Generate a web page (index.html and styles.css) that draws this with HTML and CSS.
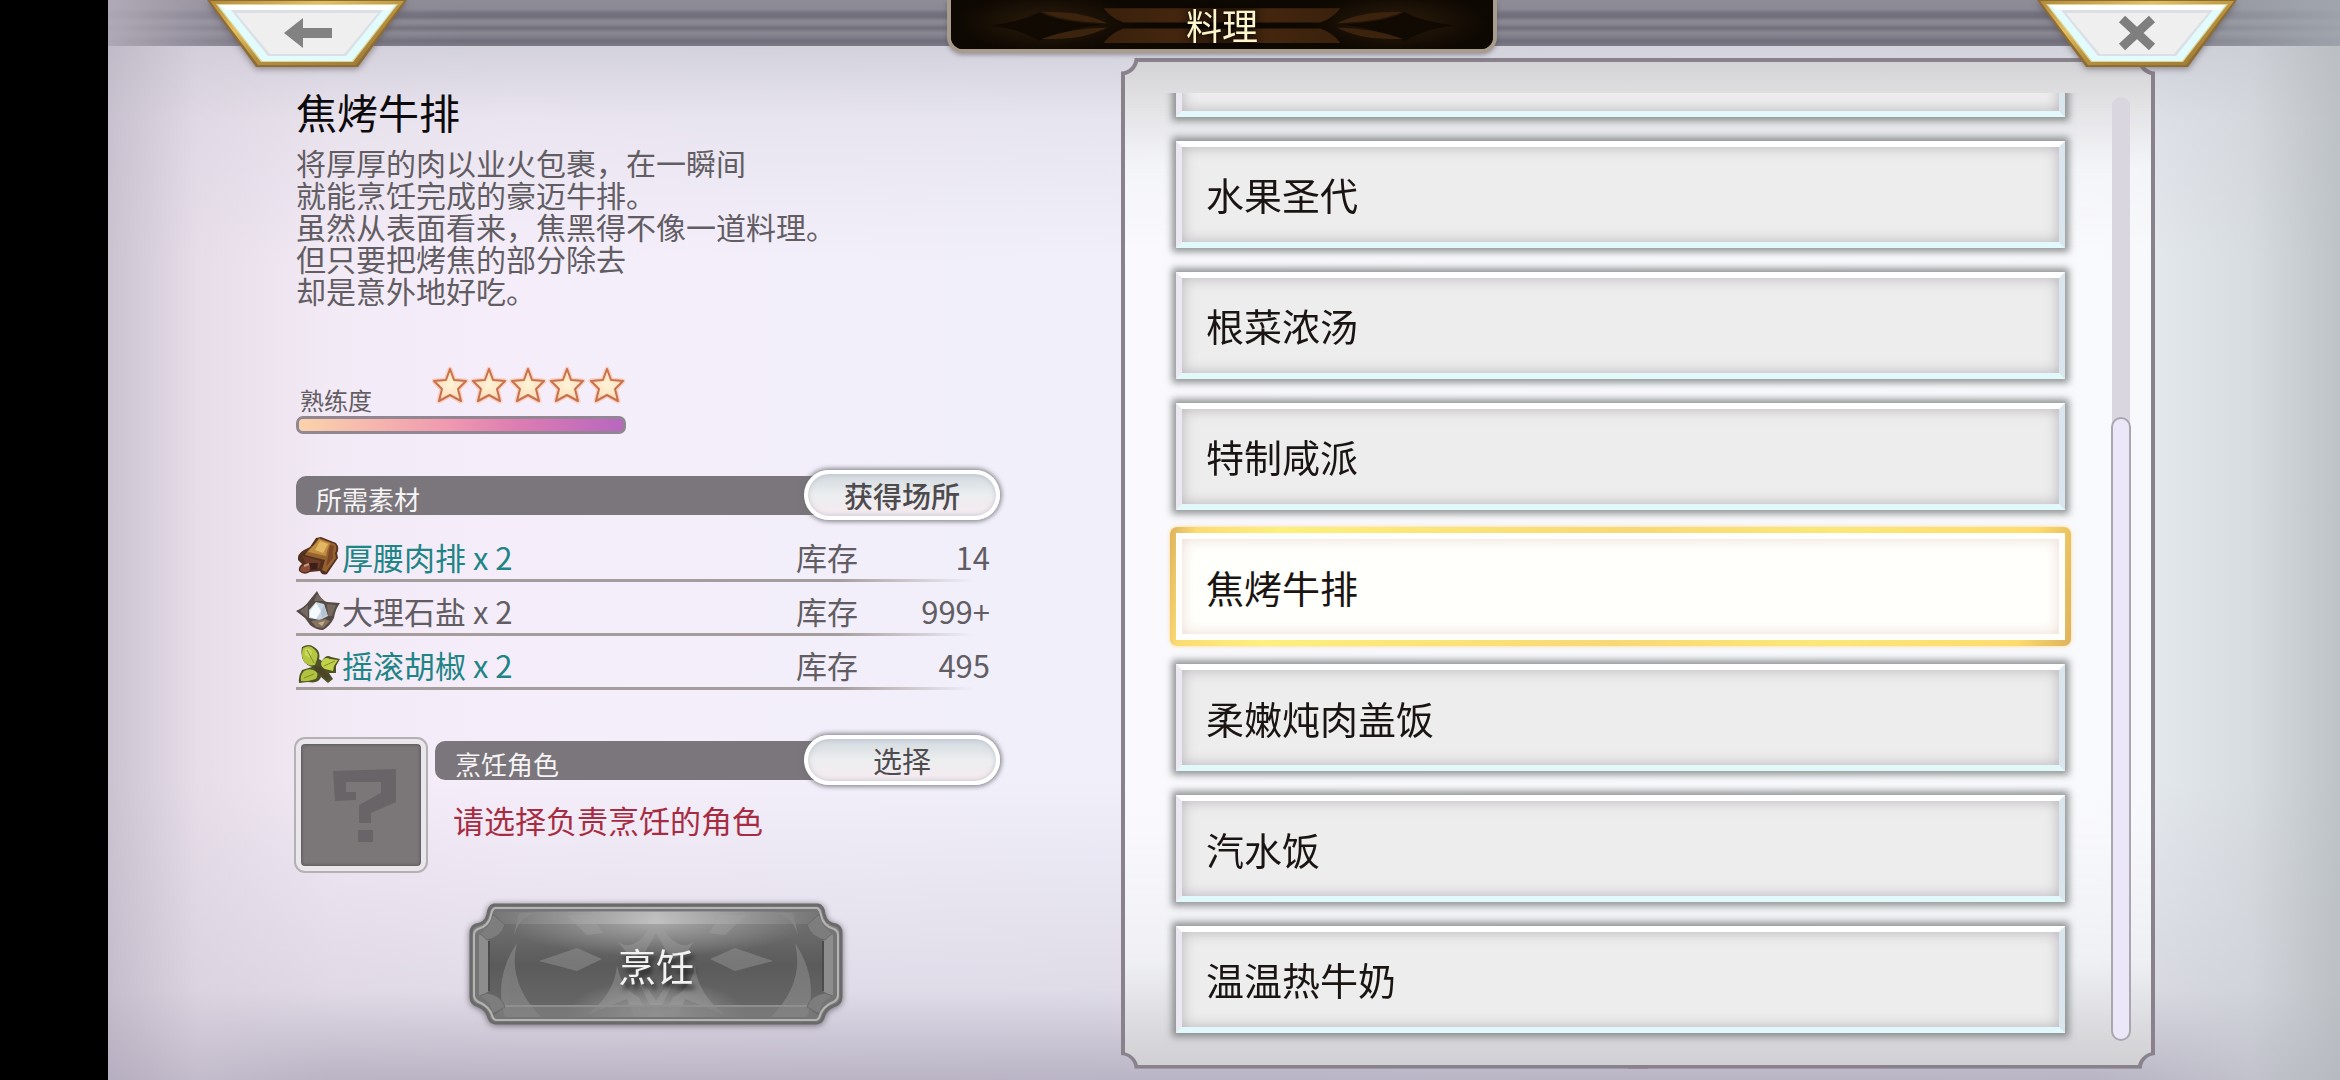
FILE: index.html
```html
<!DOCTYPE html>
<html lang="zh-CN">
<head>
<meta charset="utf-8">
<meta name="viewport" content="width=device-width, initial-scale=1">
<title>料理</title>
<link rel="stylesheet" href="styles.css">
</head>
<body>
<div class="stage">
  <header class="topbar">
    <button class="corner-button" type="button" aria-label="返回">
      <svg class="corner-art" viewBox="0 0 200 68" aria-hidden="true">
        <defs>
          <linearGradient id="gold" x1="0" y1="0" x2="1" y2="1">
            <stop offset="0" stop-color="#b48a3c"/><stop offset=".3" stop-color="#e2bf62"/>
            <stop offset=".55" stop-color="#b8923f"/><stop offset="1" stop-color="#9a7635"/>
          </linearGradient>
        </defs>
        <path d="M0 0H200L151 67H49Z" fill="#8e6d33"/>
        <path d="M3 1H197L149 65H51Z" fill="url(#gold)"/>
        <path d="M9 4H191L146 62H54Z" fill="#dcd79a"/>
        <path d="M11 5H189L145 61H55Z" fill="#e2fbfc"/>
        <path d="M13 5H187L182 10H19Z" fill="#fff"/>
        <path d="M24 10H176L139 56H61Z" fill="#dcdfe6"/>
        <path d="M29 13H171L137 54H63Z" fill="#efefef"/>
        <path d="M77 33L96 18V28H125V38H96V48Z" fill="#828282"/>
      </svg>
    </button>
    <div class="plaque">
      <svg class="plaque-art" viewBox="0 0 540 48" preserveAspectRatio="none" aria-hidden="true">
        <defs>
          <radialGradient id="glow"><stop offset="0" stop-color="#3a240f"/><stop offset="1" stop-color="#0d0802"/></radialGradient>
          <linearGradient id="bar" x1="0" y1="0" x2="1" y2="0"><stop offset="0" stop-color="#3a210c"/><stop offset=".6" stop-color="#43260e"/><stop offset="1" stop-color="#2c190a"/></linearGradient>
        </defs>
        <rect width="540" height="48" fill="#0d0802"/>
        <ellipse cx="95" cy="22" rx="90" ry="30" fill="url(#glow)" opacity=".7"/>
        <ellipse cx="445" cy="22" rx="90" ry="30" fill="url(#glow)" opacity=".7"/>
        <g id="wing">
          <path d="M38 25Q68 22 88 12Q110 22 150 24Q110 30 88 40Q68 28 38 25Z" fill="#110a03"/>
          <path d="M90 12Q130 10 156 23Q118 22 90 12Z" fill="#3c230e"/>
          <path d="M90 38Q130 40 156 27Q118 28 90 38Z" fill="#3c230e"/>
          <path d="M152 8H270V22H172Q160 18 152 8Z" fill="url(#bar)"/>
          <path d="M152 42H270V28H172Q160 32 152 42Z" fill="url(#bar)"/>
        </g>
        <use href="#wing" transform="translate(540 0) scale(-1 1)"/>
      </svg>
      <h1 class="plaque-title">料理</h1>
    </div>
    <button class="corner-button" type="button" aria-label="关闭">
      <svg class="corner-art" viewBox="0 0 200 68" aria-hidden="true">
        <path d="M0 0H200L151 67H49Z" fill="#8e6d33"/>
        <path d="M3 1H197L149 65H51Z" fill="url(#gold)"/>
        <path d="M9 4H191L146 62H54Z" fill="#dcd79a"/>
        <path d="M11 5H189L145 61H55Z" fill="#e2fbfc"/>
        <path d="M13 5H187L182 10H19Z" fill="#fff"/>
        <path d="M24 10H176L139 56H61Z" fill="#dcdfe6"/>
        <path d="M29 13H171L137 54H63Z" fill="#efefef"/>
        <path d="M85 19L115 47M115 19L85 47" stroke="#7f7f7f" stroke-width="9" fill="none"/>
      </svg>
    </button>
  </header>

  <main class="content">
    <section class="detail">
      <h2 class="dish-name">焦烤牛排</h2>
      <p class="dish-text">将厚厚的肉以业火包裹，在一瞬间<br>就能烹饪完成的豪迈牛排。<br>虽然从表面看来，焦黑得不像一道料理。<br>但只要把烤焦的部分除去<br>却是意外地好吃。</p>

      <div class="skill">
        <span class="skill-label">熟练度</span>
        <svg class="stars" viewBox="0 0 194 38" role="img" aria-label="五颗星">
          <defs>
            <radialGradient id="starfill"><stop offset="0" stop-color="#fff4d8"/><stop offset="1" stop-color="#fbdcb8"/></radialGradient>
            <path id="star" d="M18 3L22 14L34 15L26 23L29 35L18 29L7 35L10 23L2 15L14 14Z" stroke-linejoin="round"/>
          </defs>
          <g fill="none" stroke="#f8cfc0" stroke-width="5">
            <use href="#star"/><use href="#star" x="39"/><use href="#star" x="78"/><use href="#star" x="117"/><use href="#star" x="157"/>
          </g>
          <g fill="url(#starfill)" stroke="#c8714e" stroke-width="2">
            <use href="#star"/><use href="#star" x="39"/><use href="#star" x="78"/><use href="#star" x="117"/><use href="#star" x="157"/>
          </g>
        </svg>
      </div>
      <div class="skill-bar"></div>

      <div class="section-head">
        <h3 class="section-title">所需素材</h3>
        <button class="pill pill-strong" type="button">获得场所</button>
      </div>

      <table class="materials">
        <tbody>
          <tr>
            <td class="mat-icon">
              <svg viewBox="0 0 44 42" aria-hidden="true">
                <path d="M20 2L25 1L40 7Q44 12 41 17L42 22L31 38Q26 40 24 35L14 36Q8 40 3 35Q2 31 6 28L2 24Q1 18 8 14L14 11Z" fill="#54301f"/>
                <path d="M23 2L39 8Q42 12 39 17L40 22L30 36L26 34L29 24L9 19Q12 13 18 9Z" fill="#96622f"/>
                <path d="M23 3L34 7Q31 14 30 20L12 16Q15 12 19 8Z" fill="#c08e40"/>
                <path d="M24 5L32 8L27 17L19 14Z" fill="#e3b761"/>
                <path d="M34 9L38 10Q36 16 37 22L30 31Q32 20 34 9Z" fill="#7a4727"/>
                <path d="M6 20L25 25L23 32L11 29Z" fill="#6e3b27"/>
                <path d="M5 31Q11 26 15 30L13 35Q7 38 4 34Z" fill="#8b4c3b"/>
                <path d="M13 27L22 27L21 33L15 34Z" fill="#3a1f1a"/>
                <path d="M8 30L13 28" stroke="#c79a80" stroke-width="2"/>
              </svg>
            </td>
            <td class="mat-name is-ready">厚腰肉排 x 2</td><td class="mat-stock">库存</td><td class="mat-count">14</td>
          </tr>
          <tr>
            <td class="mat-icon">
              <svg viewBox="0 0 44 42" aria-hidden="true">
                <path d="M21 1Q25 10 31 12L44 13Q39 20 38 28Q34 36 27 40Q20 40 14 35L9 28L0 21Q9 17 13 11Z" fill="#544a43"/>
                <path d="M21 4L28 11L18 11ZM4 21L12 15L12 28ZM40 15L31 14L32 26L36 26Z" fill="#75695f"/>
                <path d="M13 20L20 12L28 14L32 26L24 30L13 28Z" fill="#c9d6e2"/>
                <path d="M14 21L20 13L25 21L20 29L14 27Z" fill="#f5fafc"/>
                <path d="M25 21L28 15L31 25L26 28Z" fill="#b4c3d2"/>
                <path d="M15 31L29 29L34 31L27 38L20 37Z" fill="#85735f"/>
                <path d="M22 33L29 31L26 36Z" fill="#c4ae8c"/>
              </svg>
            </td>
            <td class="mat-name">大理石盐 x 2</td><td class="mat-stock">库存</td><td class="mat-count">999+</td>
          </tr>
          <tr>
            <td class="mat-icon">
              <svg viewBox="0 0 44 42" aria-hidden="true">
                <path d="M6 3Q13 -1 18 3Q25 7 23 15L26 17Q30 10 35 13L44 15L40 22L40 29L33 29L37 35L32 39L25 33Q23 40 12 38L3 39Q2 32 6 26L16 23Q3 19 6 3Z" fill="#4d5227"/>
                <path d="M7 4Q14 0 18 5Q23 9 21 15L19 21Q11 23 7 16Q5 10 7 4Z" fill="#b5c640"/>
                <path d="M25 19Q28 12 34 15L42 16L38 22L37 27L29 25Q25 23 25 19Z" fill="#c2d14a"/>
                <path d="M5 37Q4 31 8 27Q14 23 21 28Q23 35 16 36Q10 38 5 37Z" fill="#b0c23e"/>
                <path d="M9 5Q15 3 16 9L13 14L9 11Z" fill="#cbd95a"/>
                <path d="M11 6L18 19M39 17L28 22M8 34L18 30" stroke="#7f8d2e" fill="none"/>
                <path d="M18 22L26 23L34 33L31 36L24 30L20 28Z" fill="#4c4426"/>
              </svg>
            </td>
            <td class="mat-name is-ready">摇滚胡椒 x 2</td><td class="mat-stock">库存</td><td class="mat-count">495</td>
          </tr>
        </tbody>
      </table>

      <div class="cook-role">
        <div class="portrait">
          <svg viewBox="0 0 120 120" aria-hidden="true">
            <path d="M32 27L95 25V58L70 69V79H58V61L80 49V38H45V48H55V56L34 57Z" fill="#686467"/>
            <path d="M57 86H72V98H57Z" fill="#686467"/>
          </svg>
        </div>
        <div class="role-info">
          <div class="section-head">
            <h3 class="section-title">烹饪角色</h3>
            <button class="pill" type="button">选择</button>
          </div>
          <p class="role-hint">请选择负责烹饪的角色</p>
        </div>
      </div>

      <button class="cook-button" type="button">
        <svg class="cook-art" viewBox="0 0 374 122" preserveAspectRatio="none" aria-hidden="true">
          <defs>
            <linearGradient id="face" x1="0" y1="0" x2="0" y2="1"><stop offset="0" stop-color="#747474"/><stop offset=".5" stop-color="#5b5b5b"/><stop offset="1" stop-color="#6a6a6a"/></linearGradient>
            <linearGradient id="bevelTop"><stop offset="0" stop-color="#777"/><stop offset=".5" stop-color="#cfcfcf"/><stop offset="1" stop-color="#777"/></linearGradient>
            <radialGradient id="shine"><stop offset="0" stop-color="#fff" stop-opacity=".4"/><stop offset="1" stop-color="#fff" stop-opacity="0"/></radialGradient>
            <clipPath id="plate"><path d="M26 8H348L354 22L364 32V92L354 100L348 114H26L20 100L10 92V32L20 22Z"/></clipPath>
          </defs>
          <path d="M25 2H349Q354 3 355 11Q357 21 367 22Q372 24 372 30V94Q372 101 364 103Q356 106 354 115Q352 120 347 120H27Q22 120 20 115Q18 106 10 103Q2 101 2 94V30Q2 24 7 22Q17 21 19 11Q20 3 25 2Z" fill="#808080" stroke="#6a6a6a" stroke-width="3"/>
          <path d="M26 5H348Q351 6 352 12Q354 23 365 26Q369 28 369 32V93Q368 98 362 100Q354 104 351 112Q350 117 346 117H28Q24 117 23 112Q20 104 12 100Q6 98 5 93V32Q5 28 9 26Q20 23 22 12Q23 6 26 5Z" fill="#757575" stroke="#b4b4b4" stroke-width="2"/>
          <g clip-path="url(#plate)">
            <rect x="8" y="8" width="358" height="108" fill="url(#face)"/>
            <ellipse cx="187" cy="20" rx="150" ry="34" fill="url(#shine)"/>
            <ellipse cx="187" cy="112" rx="90" ry="36" fill="url(#shine)"/>
            <g id="half" fill="#a4a4a4" opacity=".4">
              <path d="M70 58L108 45L133 56L108 68Z"/>
              <path d="M97 12H122L134 30L118 32Z"/>
              <path d="M48 40Q24 76 36 114H72Q38 80 48 40ZM44 36Q49 14 66 10H50Z"/>
              <path d="M148 38Q160 48 174 34L187 14V30L172 56L158 50Z"/>
              <path d="M118 112Q146 90 148 62Q152 86 170 94L180 116H166L158 96Z"/>
              <path d="M170 80L187 114V98L178 84Z"/>
            </g>
            <use href="#half" transform="translate(374 0) scale(-1 1)"/>
            <path d="M22 9H352L340 21H34Z" fill="url(#bevelTop)" opacity=".65"/>
            <path d="M36 103H338L352 115H22Z" fill="#828282" opacity=".6"/>
            <path d="M36 103H338" stroke="#8f8f8f" stroke-width="2"/>
            <path d="M8 28L20 38V88L8 96ZM366 28L354 38V88L366 96Z" fill="#8d8d8d"/>
            <path d="M20 38V88M354 38V88" stroke="#4c4c4c" stroke-width="2"/>
            <path d="M8 28L25 12L36 22Q32 34 18 37ZM366 28L349 12L338 22Q342 34 356 37ZM8 94L22 112L36 104Q32 92 18 90ZM366 94L352 112L338 104Q342 92 356 90Z" fill="#7d7d7d" stroke="#6a6a6a"/>
          </g>
        </svg>
        <span class="cook-label">烹饪</span>
      </button>
    </section>

    <section class="panel" aria-label="料理列表">
      <div class="list-view">
        <ul class="dish-list">
          <li><button class="dish" type="button" aria-label="上一道料理"></button></li>
          <li><button class="dish" type="button">水果圣代</button></li>
          <li><button class="dish" type="button">根菜浓汤</button></li>
          <li><button class="dish" type="button">特制咸派</button></li>
          <li class="is-selected"><button class="dish" type="button" aria-pressed="true">焦烤牛排</button></li>
          <li><button class="dish" type="button">柔嫩炖肉盖饭</button></li>
          <li><button class="dish" type="button">汽水饭</button></li>
          <li><button class="dish" type="button">温温热牛奶</button></li>
        </ul>
      </div>
      <div class="scroll-track"><div class="scroll-thumb"></div></div>
    </section>
  </main>
</div>
</body>
</html>
```
FILE: styles.css
```css
* { box-sizing: border-box; }

body {
  margin: 0;
  padding-left: 108px;
  background: #000;
  color: #625d63;
  font-family: "Noto Sans CJK SC", "Noto Sans", sans-serif;
  font-size: 30px;
}

h1, h2, h3, p, ul { margin: 0; padding: 0; font-weight: 400; }
ul { list-style: none; }

button {
  margin: 0;
  padding: 0;
  border: 0;
  background: none;
  font: inherit;
  color: inherit;
  cursor: pointer;
}

svg { display: block; }

.stage {
  display: flex;
  flex-direction: column;
  min-height: 100vh;
  background:
    linear-gradient(90deg, rgba(180, 172, 188, .6), rgba(212, 203, 216, .35) 4%, rgba(235, 222, 235, 0) 10%),
    linear-gradient(270deg, rgba(182, 187, 191, .85), rgba(200, 205, 209, .55) 4%, rgba(225, 230, 234, 0) 11%),
    linear-gradient(180deg, rgba(198, 198, 208, .75) 40px, rgba(217, 214, 224, .4) 120px, rgba(235, 232, 240, 0) 260px),
    linear-gradient(0deg, rgba(176, 170, 188, .85), rgba(202, 196, 210, .45) 90px, rgba(220, 216, 228, 0) 300px),
    linear-gradient(90deg, #efe5f0, #f5eefa 18%, #f0effa 44%, #eef2f8 75%, #e9eef3);
}

/* Top bar */
.topbar {
  position: relative;
  z-index: 1;
  display: flex;
  justify-content: space-between;
  align-items: flex-start;
  height: 46px;
  padding: 0 103px 0 99px;
  background:
    linear-gradient(90deg, rgba(180, 172, 186, .9), rgba(150, 145, 158, .4) 6%, rgba(120, 118, 128, 0) 16%, rgba(120, 118, 128, 0) 88%, rgba(164, 170, 178, .85)),
    linear-gradient(180deg, #8e8c96 0, #8b8993 9px, #74727e 13px, #706e7a 17px, #8b8994 21px, #878590 24px, #716f7b 28px, #8a8893 33px, #82808b 36px, #706e7a 41px, #7c7a86 46px);
}

.corner-button { width: 200px; filter: drop-shadow(0 2px 3px rgba(90, 80, 90, .6)); }
.corner-art { width: 100%; }

.plaque {
  position: relative;
  width: 550px;
  height: 53px;
  overflow: hidden;
  border: 4px solid #a89c8c;
  border-top: 0;
  border-radius: 0 0 16px 16px;
  background: #0d0802;
  box-shadow: 0 2px 4px rgba(90, 80, 90, .5);
}
.plaque-art { position: absolute; inset: 0; width: 100%; height: 100%; }
.plaque-title {
  position: relative;
  color: #fdf6cc;
  font-size: 36px;
  line-height: 48px;
  text-align: center;
  text-shadow: 0 0 6px #000;
}

/* Two-column body */
.content {
  flex: 1;
  display: grid;
  grid-template-columns: 706fr 1034fr;
  column-gap: 119px;
  padding: 0 185px 0 188px;
}

.detail {
  display: flex;
  flex-direction: column;
  padding: 41px 0 32px;
}

.dish-name { color: #0c0a0c; font-size: 41px; line-height: 48px; }
.dish-text { margin-top: 11px; font-size: 30px; line-height: 32px; }

.skill {
  display: flex;
  align-items: flex-end;
  gap: 60px;
  margin-top: 60px;
  padding-left: 4px;
}
.skill-label { font-size: 24px; line-height: 28px; }
.stars { width: 194px; height: 38px; margin-bottom: 10px; }
.skill-bar {
  width: 330px;
  height: 18px;
  margin-top: 2px;
  border: 3px solid #908792;
  border-radius: 7px;
  background: linear-gradient(90deg, #fbd3ab, #f09ab0 45%, #dc7cb2 68%, #b866c0);
}

.section-head {
  display: flex;
  align-items: center;
  height: 54px;
}
.detail > .section-head { margin-top: 34px; }
.section-title {
  flex: 1;
  height: 39px;
  margin-right: -28px;
  padding: 3px 20px 0;
  border-radius: 10px 0 0 10px;
  background: #7b767b;
  color: #f6f4f6;
  font-size: 26px;
  line-height: 39px;
}

.pill {
  width: 196px;
  height: 50px;
  margin-right: 2px;
  border: 4px solid #fff;
  border-radius: 25px;
  background: linear-gradient(180deg, #d2d9df, #eceeef 50%, #f3ebf0 85%, #f0e8ee);
  box-shadow: 0 0 4px 2px rgba(112, 112, 118, .75), inset 0 0 5px rgba(160, 170, 180, .6);
  color: #4e4b4e;
  font-size: 29px;
  line-height: 40px;
}
.pill-strong { font-weight: 500; }

.materials {
  width: 100%;
  margin-top: 6px;
  border-collapse: collapse;
  font-size: 31px;
  line-height: 40px;
}
.materials tr {
  height: 54px;
  background: linear-gradient(90deg, #a59c9c 80%, rgba(165, 156, 156, 0)) 0 100% / 96% 3px no-repeat;
}
.materials td { padding: 7px 0 3px; }
.mat-icon { width: 46px; }
.mat-icon svg { width: 44px; height: 42px; }
.is-ready { color: #1f8486; }
.mat-stock { width: 70px; }
.materials .mat-count { width: 136px; padding-right: 12px; text-align: right; }

.cook-role {
  display: flex;
  gap: 9px;
  margin-top: 43px;
}
.portrait {
  width: 130px;
  height: 132px;
  margin-top: 6px;
  border: 5px solid #e9e7e9;
  border-radius: 9px;
  background: #7b7779;
  box-shadow: 0 0 0 2px #b4b0b4, inset 0 0 3px 1px #5b575a;
}
.role-info { flex: 1; }
.role-hint {
  margin-top: 13px;
  padding-left: 18px;
  color: #a72c42;
  font-size: 31px;
  line-height: 40px;
}

.cook-button {
  position: relative;
  align-self: center;
  width: 374px;
  height: 122px;
  margin: 32px 0 0 14px;
  filter: drop-shadow(0 1px 3px rgba(70, 66, 70, .7));
}
.cook-art { position: absolute; inset: 0; width: 100%; height: 100%; }
.cook-label {
  position: relative;
  color: #f2f2f2;
  font-size: 38px;
  line-height: 124px;
  text-shadow: 3px 5px 5px #222;
}

/* Dish list: scooped-corner frame */
.panel {
  display: flex;
  justify-content: space-between;
  gap: 34px;
  margin: 12px 0 11px;
  padding: 31px 20px 20px 39px;
  border: 4px solid #89818c;
  background:
    radial-gradient(circle at 0 0, #89818c 17px, transparent 18px),
    radial-gradient(circle at 100% 0, #89818c 17px, transparent 18px),
    radial-gradient(circle at 0 100%, #89818c 17px, transparent 18px),
    radial-gradient(circle at 100% 100%, #89818c 17px, transparent 18px),
    linear-gradient(180deg, #d2d2d4, #e0e0e3 40px, rgba(245, 246, 249, .9) 110px, rgba(252, 252, 254, .8) 190px, rgba(252, 252, 254, .8) calc(100% - 240px), rgba(242, 243, 246, .85) calc(100% - 110px), #cfcfd2);
  background-repeat: no-repeat;
  background-size: 50% 50%, 50% 50%, 50% 50%, 50% 50%, 100% 100%;
  background-position: 0 0, 100% 0, 0 100%, 100% 100%, 0 0;
  background-origin: border-box;
  -webkit-mask:
    radial-gradient(circle at 0 0, transparent 13px, #000 14px) 0 0 / 51% 51% no-repeat,
    radial-gradient(circle at 100% 0, transparent 13px, #000 14px) 100% 0 / 51% 51% no-repeat,
    radial-gradient(circle at 0 100%, transparent 13px, #000 14px) 0 100% / 51% 51% no-repeat,
    radial-gradient(circle at 100% 100%, transparent 13px, #000 14px) 100% 100% / 51% 51% no-repeat;
}

.list-view {
  flex: 1;
  display: grid;
  overflow: hidden;
}
.dish-list {
  display: flex;
  flex-direction: column;
  justify-content: space-between;
  margin-top: -83px;
  padding: 0 12px 12px;
}
.dish-list li { position: relative; }
.dish {
  display: block;
  width: 100%;
  height: 107px;
  padding: 0 24px;
  border: 6px solid;
  border-color: #fff #d9e6ed #e2f9fb #ebe8f1;
  background: #ededed;
  box-shadow: 0 0 7px 4px rgba(112, 116, 116, .75), inset 0 0 14px rgba(140, 132, 140, .55);
  color: #1a1513;
  font-size: 38px;
  line-height: 56px;
  text-align: left;
}
.is-selected::before {
  content: "";
  position: absolute;
  inset: -6px;
  border-radius: 7px;
  background: linear-gradient(100deg, #deb35c, #fbdc72 3%, #fdf07c 12%, #f8d874 50%, #fbe878 72%, #fddc6c 94%, #deb25c);
  box-shadow: 0 0 4px rgba(250, 205, 120, .8);
}
.is-selected .dish {
  position: relative;
  border-color: #fffffd;
  background: #fffffc;
  box-shadow: inset 0 0 14px rgba(225, 195, 185, .6);
}

.scroll-track {
  display: flex;
  width: 20px;
  margin: 4px 0 4px;
  padding-top: 320px;
  border-radius: 10px;
  background: linear-gradient(#d9d6df, #d9d6df) 50% 0 / 18px 100% no-repeat;
}
.scroll-thumb {
  flex: 1;
  border: 2px solid #aaa6b0;
  border-radius: 10px;
  background: #ebe7f9;
}
```
